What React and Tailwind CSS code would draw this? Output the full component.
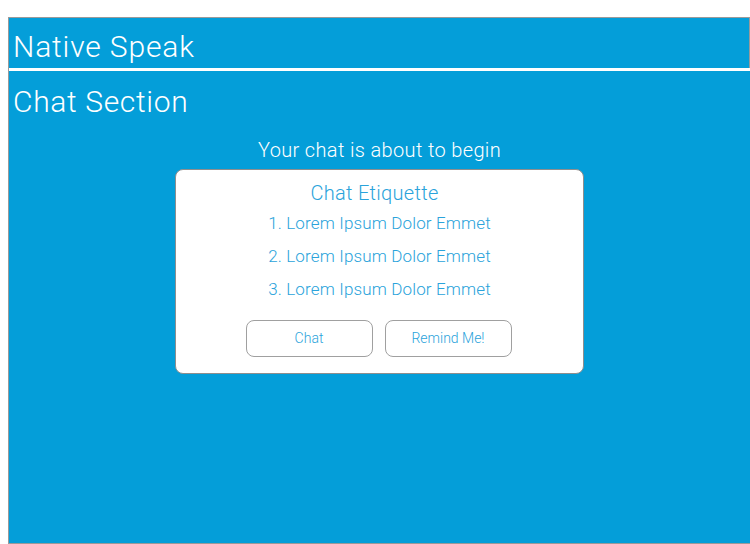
export default function App() {
  const font = { fontFamily: 'Roboto, "Liberation Sans", sans-serif' };
  return (
    <div className="w-[750px] h-[544px] bg-white overflow-hidden font-light" style={font}>
      <div className="h-[17px]" />
      <div className="ml-[8px] h-[51px] bg-[#049ed9] border-t border-l border-r border-[#9a9a9a] flex items-center pl-[4px]">
        <span className="text-white text-[30px] leading-none tracking-[0.85px] mt-[8px]">Native Speak</span>
      </div>
      <div className="ml-[8px] h-[3px] bg-white border-l border-[#9a9a9a]" />
      <div className="ml-[8px] h-[473px] bg-[#049ed9] border-l border-b border-[#9a9a9a] flex flex-col">
        <div className="pl-[4px] pt-[14px] text-white text-[30px] leading-[34px] tracking-[0.65px]">Chat Section</div>
        <div className="text-center text-white text-[20px] leading-[24px] mt-[19px] tracking-[0.35px]">Your chat is about to begin</div>
        <div className="mx-auto mt-[7px] w-[409px] h-[205px] bg-white rounded-[8px] border border-[#8e8e8e] flex flex-col items-center text-[#2aa3db]">
          <div className="text-[20px] leading-[24px] mt-[11px] -ml-[10px] tracking-[0.3px]">Chat Etiquette</div>
          <div className="text-[17px] leading-[33px] mt-[2px] tracking-[0.15px] flex flex-col items-center">
            <div>1. Lorem Ipsum Dolor Emmet</div>
            <div>2. Lorem Ipsum Dolor Emmet</div>
            <div>3. Lorem Ipsum Dolor Emmet</div>
          </div>
          <div className="flex gap-[12px] mt-[14px] -ml-[2px]">
            <button className="w-[127px] h-[37px] rounded-[8px] border border-[#a0a0a0] text-[14px] text-[#2aa3db] font-light">Chat</button>
            <button className="w-[127px] h-[37px] rounded-[8px] border border-[#a0a0a0] text-[14px] text-[#2aa3db] font-light">Remind Me!</button>
          </div>
        </div>
      </div>
    </div>
  );
}
